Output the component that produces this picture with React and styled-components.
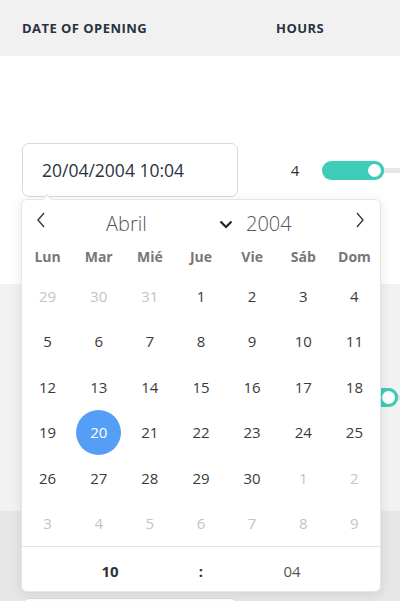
import React from "react";
import styled, { createGlobalStyle } from "styled-components";

const Global = createGlobalStyle`
  html, body { margin: 0; padding: 0; }
  body {
    font-family: "Open Sans", "Noto Sans", Arial, sans-serif;
    background: #ffffff;
    overflow: hidden;
    width: 400px;
    height: 601px;
  }
`;

const Page = styled.div`
  width: 400px;
  height: 601px;
  overflow: hidden;
  display: flex;
  flex-direction: column;
`;

const HeaderRow = styled.div`
  display: grid;
  grid-template-columns: 254px 1fr;
  height: 56px;
  flex-shrink: 0;
  align-items: center;
  padding-left: 22px;
  background: #f1f1f1;
`;

const HeaderCell = styled.div`
  font-size: 13px;
  font-weight: 700;
  color: #2a3141;
  letter-spacing: 0.45px;
  text-transform: uppercase;
`;

const Row = styled.div`
  display: grid;
  grid-template-columns: 254px 1fr;
  align-items: center;
  height: ${(p) => p.$h}px;
  flex-shrink: 0;
  padding-left: 22px;
  background: ${(p) => p.$bg};
  position: relative;
  z-index: ${(p) => (p.$top ? 2 : 1)};
`;

const DateCell = styled.div`
  position: relative;
`;

const Input = styled.div`
  box-sizing: border-box;
  width: 216px;
  height: 54px;
  border: 1px solid #d9d9d9;
  border-radius: 7px;
  background: #fff;
  display: flex;
  align-items: center;
  padding-left: 19px;
  font-size: 17.5px;
  color: #2b3242;
`;

const HoursCell = styled.div`
  display: flex;
  align-items: center;
  gap: 8px;
`;

const Value = styled.div`
  width: 38px;
  text-align: center;
  font-size: 15px;
  color: #333;
`;

const Slider = styled.div`
  position: relative;
  width: 140px;
  height: 19px;
  display: flex;
  align-items: center;
`;

const Track = styled.div`
  width: 100%;
  height: 5px;
  background: ${(p) => p.$c};
`;

const Fill = styled.div`
  position: absolute;
  left: 0;
  top: 0;
  height: 19px;
  border-radius: 10px;
  background: #3ccdb9;
`;

const Thumb = styled.div`
  position: absolute;
  top: 0;
  box-sizing: border-box;
  width: 19px;
  height: 19px;
  border-radius: 50%;
  background: #fff;
  border: 3px solid #3ccdb9;
`;

const Popup = styled.div`
  position: absolute;
  left: -1px;
  top: 56px;
  z-index: 5;
  box-sizing: border-box;
  width: 360px;
  height: 393px;
  background: #fff;
  border: 1px solid #e6e6e6;
  border-radius: 6px;
  box-shadow: 0 2px 12px rgba(0, 0, 0, 0.1);
  display: flex;
  flex-direction: column;
`;

const Caret = styled.div`
  position: absolute;
  top: -4px;
  left: 21px;
  width: 7px;
  height: 7px;
  background: #fff;
  border-left: 1px solid #e6e6e6;
  border-top: 1px solid #e6e6e6;
  transform: rotate(45deg);
`;

const Nav = styled.div`
  display: grid;
  grid-template-columns: 40px 1fr 40px;
  align-items: center;
  height: 43px;
`;

const ArrowBtn = styled.div`
  display: flex;
  justify-content: center;
  align-items: center;
  padding-bottom: 3px;
  padding-right: ${(p) => (p.$left ? 2 : 0)}px;
`;

const MonthYear = styled.div`
  display: flex;
  align-items: center;
  padding-left: 44px;
  padding-top: 5px;
  gap: 13px;
`;

const MonthSelect = styled.div`
  width: 127px;
  display: flex;
  align-items: center;
  justify-content: space-between;
`;

const NavText = styled.span`
  font-size: 20px;
  font-weight: 300;
  color: #555;
  line-height: 24px;
`;

const WeekRow = styled.div`
  display: grid;
  grid-template-columns: repeat(7, 1fr);
  height: 30px;
  align-items: center;
  padding-bottom: 3px;
  box-sizing: border-box;
`;

const WeekDay = styled.div`
  text-align: center;
  font-size: 14px;
  font-weight: 700;
  color: #777;
`;

const Days = styled.div`
  display: grid;
  grid-template-columns: repeat(7, 1fr);
  grid-auto-rows: 45.5px;
  border-bottom: 1px solid #e4e4e4;
`;

const Day = styled.div`
  display: flex;
  align-items: center;
  justify-content: center;
`;

const DayNum = styled.span`
  width: 45px;
  height: 45px;
  border-radius: 50%;
  display: flex;
  align-items: center;
  justify-content: center;
  font-size: 15px;
  color: ${(p) => (p.$sel ? "#fff" : p.$muted ? "#c4c4c4" : "#3a3a3a")};
  background: ${(p) => (p.$sel ? "#559ef6" : "transparent")};
`;

const TimeRow = styled.div`
  flex: 1;
  display: grid;
  grid-template-columns: repeat(3, 91px);
  justify-content: center;
  align-items: center;
  padding-top: 3px;
`;

const TimePart = styled.div`
  text-align: center;
  font-size: 15px;
  font-weight: ${(p) => (p.$bold ? 700 : 400)};
  color: ${(p) => (p.$bold ? "#333" : "#555")};
`;

const Chevron = ({ dir }) => (
  <svg width="10" height="16" viewBox="0 0 10 16">
    <polyline
      points={dir === "left" ? "8,1 2,8 8,15" : "2,1 8,8 2,15"}
      fill="none"
      stroke="#333"
      strokeWidth="1.3"
    />
  </svg>
);

const Down = () => (
  <svg width="14" height="9" viewBox="0 0 14 9">
    <polyline points="1.5,1.5 7,7 12.5,1.5" fill="none" stroke="#222" strokeWidth="2.2" />
  </svg>
);

const weekDays = ["Lun", "Mar", "Mié", "Jue", "Vie", "Sáb", "Dom"];

const buildDays = () => {
  const d = [];
  [29, 30, 31].forEach((n) => d.push({ n, m: true }));
  for (let i = 1; i <= 30; i++) d.push({ n: i, m: false, s: i === 20 });
  for (let i = 1; i <= 9; i++) d.push({ n: i, m: true });
  return d;
};

const SliderBar = ({ pos, track }) => (
  <Slider>
    <Track $c={track} />
    <Fill style={{ width: pos + 9.5 }} />
    <Thumb style={{ left: pos - 9.5 }} />
  </Slider>
);

export default function App() {
  const days = buildDays();
  return (
    <Page>
      <Global />
      <HeaderRow>
        <HeaderCell>Date of opening</HeaderCell>
        <HeaderCell>Hours</HeaderCell>
      </HeaderRow>
      <Row $h={228} $bg="#ffffff" $top>
        <DateCell>
          <Input>20/04/2004 10:04</Input>
          <Popup>
            <Caret />
            <Nav>
              <ArrowBtn $left>
                <Chevron dir="left" />
              </ArrowBtn>
              <MonthYear>
                <MonthSelect>
                  <NavText>Abril</NavText>
                  <Down />
                </MonthSelect>
                <NavText>2004</NavText>
              </MonthYear>
              <ArrowBtn>
                <Chevron dir="right" />
              </ArrowBtn>
            </Nav>
            <WeekRow>
              {weekDays.map((w) => (
                <WeekDay key={w}>{w}</WeekDay>
              ))}
            </WeekRow>
            <Days>
              {days.map((d, i) => (
                <Day key={i}>
                  <DayNum $muted={d.m} $sel={d.s}>
                    {d.n}
                  </DayNum>
                </Day>
              ))}
            </Days>
            <TimeRow>
              <TimePart $bold>10</TimePart>
              <TimePart $bold>:</TimePart>
              <TimePart>04</TimePart>
            </TimeRow>
          </Popup>
        </DateCell>
        <HoursCell>
          <Value>4</Value>
          <SliderBar pos={52} track="#e8e8e8" />
        </HoursCell>
      </Row>
      <Row $h={227} $bg="#f2f2f2">
        <DateCell>
          <Input />
        </DateCell>
        <HoursCell>
          <Value />
          <SliderBar pos={66} track="#e2e2e2" />
        </HoursCell>
      </Row>
      <Row $h={228} $bg="#e6e7e6">
        <DateCell>
          <Input />
        </DateCell>
        <HoursCell>
          <Value />
          <SliderBar pos={30} track="#d8d8d8" />
        </HoursCell>
      </Row>
    </Page>
  );
}
